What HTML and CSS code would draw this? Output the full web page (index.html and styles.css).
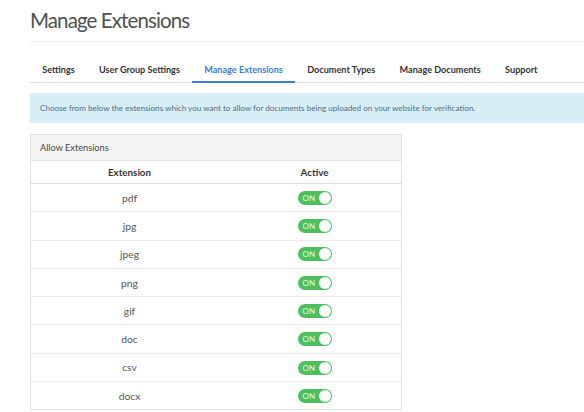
FILE: index.html
```html
<!DOCTYPE html>
<html lang="en">
<head>
  <meta charset="UTF-8">
  <title>Manage Extensions</title>
  <link rel="stylesheet" href="styles.css">
</head>
<body>
  <div class="page">
    <h1 class="title">Manage Extensions</h1>

    <ul class="tabs">
      <li>Settings</li>
      <li>User Group Settings</li>
      <li class="active">Manage Extensions</li>
      <li>Document Types</li>
      <li>Manage Documents</li>
      <li>Support</li>
    </ul>

    <div class="alert">Choose from below the extensions which you want to allow for documents being uploaded on your website for verification.</div>

    <div class="panel">
      <div class="panel-heading">Allow Extensions</div>
      <div class="grid">
        <div class="row head">
          <div>Extension</div>
          <div>Active</div>
        </div>
        <div class="row"><div>pdf</div><div><span class="toggle">ON</span></div></div>
        <div class="row"><div>jpg</div><div><span class="toggle">ON</span></div></div>
        <div class="row"><div>jpeg</div><div><span class="toggle">ON</span></div></div>
        <div class="row"><div>png</div><div><span class="toggle">ON</span></div></div>
        <div class="row"><div>gif</div><div><span class="toggle">ON</span></div></div>
        <div class="row"><div>doc</div><div><span class="toggle">ON</span></div></div>
        <div class="row"><div>csv</div><div><span class="toggle">ON</span></div></div>
        <div class="row"><div>docx</div><div><span class="toggle">ON</span></div></div>
      </div>
    </div>
  </div>
</body>
</html>
```

FILE: styles.css
```css
body {
  margin: 0;
  font-family: 'Lato', 'Liberation Sans', sans-serif;
  background: #fff;
  color: #555;
  overflow: hidden;
}

.page {
  padding-left: 30px;
  width: 600px;
}

.title {
  margin: 0;
  padding: 8px 0 0;
  height: 33px;
  font-size: 20.5px;
  letter-spacing: -0.9px;
  font-weight: normal;
  color: #505050;
  border-bottom: 1px solid #eee;
}

.tabs {
  list-style: none;
  margin: 17px 0 0;
  padding: 0;
  display: flex;
  border-bottom: 1px solid #ddd;
}

.tabs li {
  padding: 5px 12.2px 6px;
  font-size: 9.1px;
  font-weight: bold;
  color: #333;
  border-bottom: 2px solid transparent;
  margin-bottom: -1px;
}

.tabs li.active {
  color: #3b7dd8;
  border-bottom-color: #3b7dd8;
}

.alert {
  margin-top: 10px;
  height: 30px;
  box-sizing: border-box;
  padding: 0 10px;
  display: flex;
  align-items: center;
  background: #d9edf7;
  color: #4a6f8a;
  font-size: 8.1px;
}

.panel {
  margin-top: 11px;
  width: 370px;
  border: 1px solid #e3e3e3;
}

.panel-heading {
  height: 25px;
  display: flex;
  align-items: center;
  padding-left: 9px;
  background: #f5f5f5;
  border-bottom: 1px solid #e3e3e3;
  font-size: 9.2px;
  color: #444;
}

.row {
  display: grid;
  grid-template-columns: 197px 1fr;
  height: 27.3px;
  align-items: center;
  text-align: center;
  border-top: 1px solid #ececec;
  font-size: 10.3px;
  color: #555;
}

.row.head {
  border-top: none;
  height: 22px;
  border-bottom: 1px solid #d6dde4;
  color: #333;
  font-size: 9.8px;
  font-weight: bold;
}

.row.head + .row {
  border-top: none;
}

.toggle {
  display: inline-flex;
  align-items: center;
  position: relative;
  width: 34px;
  height: 14px;
  box-sizing: border-box;
  padding-left: 5px;
  border-radius: 7px;
  background: #4cc05d;
  color: #eafbe9;
  font-size: 8px;
  vertical-align: middle;
}

.toggle::after {
  content: '';
  position: absolute;
  right: 1px;
  top: 1px;
  width: 12px;
  height: 12px;
  border-radius: 50%;
  background: #fff;
}
```
